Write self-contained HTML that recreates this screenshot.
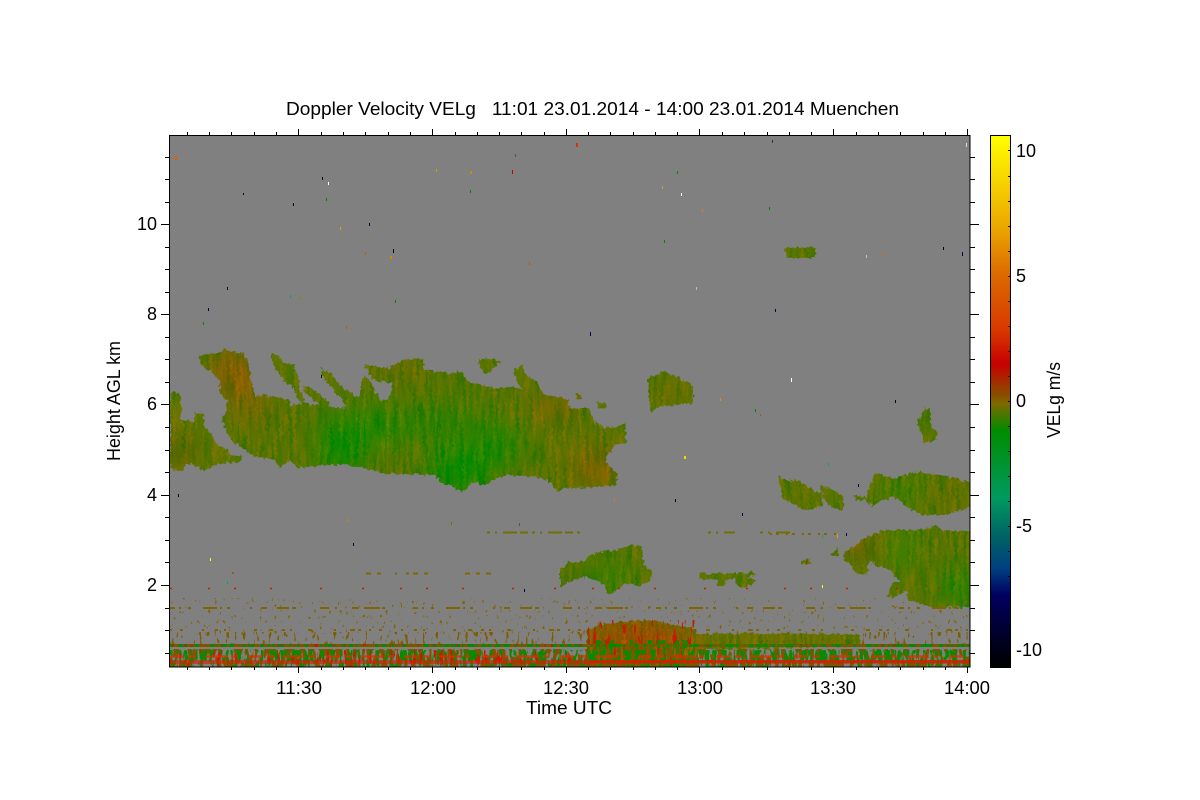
<!DOCTYPE html>
<html><head><meta charset="utf-8"><title>Doppler Velocity VELg</title>
<style>html,body{margin:0;padding:0;background:#fff;width:1200px;height:800px;overflow:hidden}svg{position:absolute;left:0;top:0}text{font-family:"Liberation Sans",sans-serif;font-size:18px;fill:#000}</style></head>
<body>
<svg width="1200" height="800" viewBox="0 0 1200 800" xmlns="http://www.w3.org/2000/svg">
<defs>
<linearGradient id="cb" x1="0" y1="135" x2="0" y2="667" gradientUnits="userSpaceOnUse">
<stop offset="0" stop-color="#ffff00"/><stop offset=".172" stop-color="#eca800"/><stop offset=".259" stop-color="#dc6c00"/><stop offset=".367" stop-color="#d83800"/><stop offset=".43" stop-color="#c80000"/><stop offset=".49" stop-color="#885000"/><stop offset=".504" stop-color="#806800"/><stop offset=".556" stop-color="#008c00"/><stop offset=".682" stop-color="#009a60"/><stop offset=".752" stop-color="#006464"/><stop offset=".814" stop-color="#004080"/><stop offset=".865" stop-color="#000060"/><stop offset="1" stop-color="#000000"/>
</linearGradient>
<filter id="streak" x="160" y="230" width="820" height="440" filterUnits="userSpaceOnUse" color-interpolation-filters="sRGB">
<feTurbulence type="fractalNoise" baseFrequency="0.3 0.03" numOctaves="2" seed="7" result="n"/>
<feColorMatrix in="n" type="matrix" values="1 0 0 0 0  .1 0 0 0 .45  0 0 0 0 0  0 0 0 0 1" result="m"/>
<feComposite in="SourceGraphic" in2="m" operator="arithmetic" k1="0" k2="1" k3=".5" k4="-.25"/>
</filter>
<filter id="jag" x="160" y="230" width="820" height="440" filterUnits="userSpaceOnUse" color-interpolation-filters="sRGB">
<feTurbulence type="fractalNoise" baseFrequency="0.3 0.25" numOctaves="2" seed="4" result="d"/>
<feDisplacementMap in="SourceGraphic" in2="d" scale="6" xChannelSelector="R" yChannelSelector="G"/>
</filter>
<filter id="blur" x="-60%" y="-60%" width="220%" height="220%"><feGaussianBlur stdDeviation="14"/></filter>
<filter id="sG" x="0" y="0" width="1" height="1" color-interpolation-filters="sRGB">
<feTurbulence type="fractalNoise" baseFrequency="0.3 0.08" numOctaves="2" seed="11"/>
<feColorMatrix type="matrix" values="0 0 0 0 .02  0 0 0 0 .55  0 0 0 0 0  22 0 0 0 -11.2"/>
<feComposite in2="SourceAlpha" operator="in"/>
</filter>
<filter id="sB" x="0" y="0" width="1" height="1" color-interpolation-filters="sRGB">
<feTurbulence type="fractalNoise" baseFrequency="0.28 0.07" numOctaves="2" seed="23"/>
<feColorMatrix type="matrix" values="0 0 0 0 .5  0 0 0 0 .33  0 0 0 0 0  22 0 0 0 -10.6"/>
<feComposite in2="SourceAlpha" operator="in"/>
</filter>
<filter id="sR" x="0" y="0" width="1" height="1" color-interpolation-filters="sRGB">
<feTurbulence type="fractalNoise" baseFrequency="0.3 0.06" numOctaves="2" seed="37"/>
<feColorMatrix type="matrix" values="0 0 0 0 .75  0 0 0 0 .12  0 0 0 0 0  22 0 0 0 -13.8"/>
<feComposite in2="SourceAlpha" operator="in"/>
</filter>
<filter id="sS" x="0" y="0" width="1" height="1" color-interpolation-filters="sRGB">
<feTurbulence type="fractalNoise" baseFrequency="0.35 0.1" numOctaves="2" seed="51"/>
<feColorMatrix type="matrix" values="0 0 0 0 .5  0 0 0 0 .36  0 0 0 0 0  24 0 0 0 -15"/>
<feComposite in2="SourceAlpha" operator="in"/>
</filter>
<filter id="sT" x="0" y="0" width="1" height="1" color-interpolation-filters="sRGB">
<feTurbulence type="fractalNoise" baseFrequency="0.35 0.2" numOctaves="2" seed="64"/>
<feColorMatrix type="matrix" values="0 0 0 0 .5  0 0 0 0 .4  0 0 0 0 0  24 0 0 0 -17"/>
<feComposite in2="SourceAlpha" operator="in"/>
</filter>
<clipPath id="cl">
<polygon transform="translate(160 340) scale(.33333)" points="30,155 62,160 65,205 62,240 85,240 100,245 105,215 130,220 135,265 155,285 170,310 190,320 215,345 248,350 240,365 150,375 150,390 125,388 100,372 75,375 70,392 35,390 30,370"/>
<polygon transform="translate(160 340) scale(.33333)" points="120,45 170,40 195,28 240,38 258,50 270,95 275,130 285,170 310,165 385,178 392,195 415,195 430,180 445,195 500,195 530,205 560,200 600,170 605,130 612,105 635,130 660,180 685,180 695,150 695,130 640,120 625,100 615,75 690,85 710,70 725,60 790,55 790,85 830,95 870,100 905,95 925,125 970,135 1000,145 1060,140 1100,155 1160,165 1225,180 1230,205 1290,205 1300,240 1330,262 1365,262 1395,250 1398,310 1365,315 1340,350 1340,370 1370,400 1370,435 1290,442 1215,445 1195,455 1165,420 1115,410 1040,405 1000,420 975,437 940,425 915,452 895,450 870,435 840,425 825,405 670,400 620,385 560,375 500,375 440,380 415,385 390,360 360,385 345,360 285,350 240,320 205,290 190,250 185,235 200,210 200,180 180,160 180,125 155,95 125,78 120,60"/>
<polygon transform="translate(160 340) scale(.33333)" points="333,42 355,45 375,70 395,70 415,110 418,150 435,180 420,185 400,145 375,125 350,90 335,65"/>
<polygon transform="translate(160 340) scale(.33333)" points="430,135 450,140 500,180 510,195 480,195 445,170 430,150"/>
<polygon transform="translate(160 340) scale(.33333)" points="485,85 510,100 545,140 590,170 600,200 560,200 540,170 500,125 483,100"/>
<polygon transform="translate(160 340) scale(.33333)" points="957,57 1003,57 1022,67 1000,80 995,103 960,90"/>
<polygon transform="translate(160 340) scale(.33333)" points="1062,92 1085,75 1095,100 1135,130 1150,165 1100,165 1075,135"/>
<polygon transform="translate(160 340) scale(.33333)" points="1250,160 1265,165 1260,178 1248,175"/>
<polygon transform="translate(160 340) scale(.33333)" points="1310,185 1338,190 1335,208 1312,205"/>
<polygon transform="translate(560 540) scale(.33333)" points="0,95 25,65 75,65 80,50 120,35 170,30 210,15 245,18 250,75 275,90 275,120 240,135 200,130 150,165 120,125 75,110 30,125 0,143"/>
<polygon transform="translate(560 540) scale(.33333)" points="415,100 450,103 480,98 530,100 580,96 590,104 560,112 592,122 560,142 530,140 525,115 500,118 495,135 472,135 470,118 420,118"/>
<polygon transform="translate(560 540) scale(.33333)" points="720,65 745,55 750,72 720,72"/>
<polygon transform="translate(760 400) scale(.33333)" points="55,225 70,240 110,240 150,265 185,285 190,320 130,330 105,315 70,300 60,265"/>
<polygon transform="translate(760 400) scale(.33333)" points="180,258 215,265 250,290 250,330 225,328 190,300"/>
<polygon transform="translate(760 400) scale(.33333)" points="280,285 310,290 325,300 320,280 345,220 400,235 470,215 545,225 640,250 640,320 550,345 485,345 440,320 400,290 360,305 335,320 320,300 285,300"/>
<polygon transform="translate(760 400) scale(.33333)" points="495,25 512,25 515,85 530,95 530,120 495,130 480,90 472,65"/>
<polygon transform="translate(760 400) scale(.33333)" points="250,460 285,435 310,415 370,390 450,390 530,380 545,392 640,392 640,620 525,625 440,600 440,570 410,590 380,590 400,545 420,545 390,510 345,495 325,480 320,520 285,520 270,490 250,480"/>
<polygon transform="translate(760 400) scale(.33333)" points="215,465 235,440 238,468 218,468"/>
<polygon transform="translate(760 400) scale(.33333)" points="120,483 150,480 150,491 120,491"/>
<polygon points="648,378 665,371 680,378 693,385 693,403 660,406 652,412 648,395"/>
<polygon points="785,248 815,247 815,258 787,258"/>
<polygon points="587,630 600,625 620,622 650,620 670,624 693,628 700,634 760,633 860,634 860,646 700,650 693,667 587,667"/>
</clipPath>
<clipPath id="plot"><rect x="170" y="136" width="800" height="531"/></clipPath>
</defs>
<rect width="1200" height="800" fill="#fff"/>
<rect x="169" y="135" width="801" height="532" fill="#808080"/>

<g clip-path="url(#plot)">
<g filter="url(#jag)">
<g clip-path="url(#cl)">
<g filter="url(#streak)">
<rect x="165" y="235" width="810" height="435" fill="#587400"/>
<g filter="url(#blur)">
<ellipse cx="342" cy="445" rx="22" ry="30" fill="#008c00"/>
<ellipse cx="378" cy="428" rx="30" ry="20" fill="#1a8800"/>
<ellipse cx="460" cy="470" rx="34" ry="22" fill="#008c00"/>
<ellipse cx="497" cy="445" rx="26" ry="22" fill="#1a8800"/>
<ellipse cx="440" cy="425" rx="50" ry="22" fill="#2e8000"/>
<ellipse cx="233" cy="372" rx="24" ry="24" fill="#8a5c00"/>
<ellipse cx="250" cy="405" rx="18" ry="16" fill="#806400"/>
<ellipse cx="178" cy="452" rx="16" ry="16" fill="#806000"/>
<ellipse cx="596" cy="468" rx="24" ry="22" fill="#806200"/>
<ellipse cx="557" cy="405" rx="26" ry="12" fill="#806200"/>
<ellipse cx="400" cy="366" rx="24" ry="8" fill="#786800"/>
<ellipse cx="610" cy="580" rx="18" ry="14" fill="#1c8400"/>
<ellipse cx="960" cy="587" rx="14" ry="18" fill="#008c00"/>
<ellipse cx="897" cy="548" rx="16" ry="16" fill="#108a00"/>
<ellipse cx="865" cy="545" rx="22" ry="12" fill="#805c00"/>
<ellipse cx="905" cy="490" rx="20" ry="10" fill="#1c8400"/>
<ellipse cx="945" cy="495" rx="14" ry="10" fill="#786800"/>
<ellipse cx="806" cy="495" rx="16" ry="9" fill="#6a7000"/>
<ellipse cx="670" cy="392" rx="20" ry="14" fill="#706c00"/>
<ellipse cx="640" cy="640" rx="60" ry="20" fill="#a04a00"/>
<ellipse cx="770" cy="640" rx="90" ry="8" fill="#7a6c00"/>
</g>
</g>
</g>
</g>

<!-- sparse rows -->
<g fill="none" stroke-width="2">
<path d="M170 608H970" stroke="#806400" stroke-dasharray="5 4 2 7 3 12 14 3 2 5 3 20 2 9 6 10 12 3 4 24 9 6 2 15 7 5 16 2 3 28" />
<path d="M170 630H970" stroke="#806400" stroke-dasharray="2 8 3 19 2 11 3 6 2 28 3 12 4 9 3 5 2 16 4 22 2 14 5 3 3 8" />
<path d="M366 573.5H440M465 573.5H480M486 573.5H495" stroke="#806800" stroke-dasharray="5 6 4 14 2 9 3 4"/>
<path d="M487 532.5H583M708 532.5H735M760 532.5H790" stroke="#6f7000" stroke-dasharray="3 5 2 6 14 3 8 4"/>
<path d="M770 534H840" stroke="#806800" stroke-dasharray="2 4 3 7"/>
<path d="M170 588.5H970" stroke="#c02000" stroke-dasharray="2 36 2 24 2 34 2 48 2 40" stroke-width="1.6"/>
</g>

<!-- dense bottom noise -->
<rect x="170" y="598" width="800" height="36" filter="url(#sT)"/>
<rect x="170" y="632" width="420" height="13" filter="url(#sS)"/>
<rect x="860" y="632" width="110" height="13" filter="url(#sS)"/>
<rect x="587" y="640" width="108" height="27" filter="url(#sG)"/>
<rect x="587" y="620" width="108" height="46" filter="url(#sR)"/>
<rect x="170" y="644" width="800" height="3" fill="#008c00"/>
<rect x="170" y="644" width="800" height="3" filter="url(#sR)"/>
<rect x="170" y="644" width="800" height="3" filter="url(#sB)"/>
<rect x="170" y="649" width="800" height="18" filter="url(#sB)"/>
<rect x="170" y="650" width="800" height="17" filter="url(#sG)"/>
<rect x="170" y="650" width="420" height="17" filter="url(#sR)"/>
<path d="M170 656.5H970" stroke="#d83000" stroke-width="2.5" stroke-dasharray="14 5 7 9 22 4 5 12" opacity=".75" fill="none"/>
<rect x="170" y="660" width="420" height="4" fill="#d02000" opacity=".6"/>
<rect x="590" y="660" width="380" height="3.5" fill="#d02000" opacity=".9"/>
<rect x="170" y="664" width="800" height="3" filter="url(#sB)"/>

<!-- scattered pixels -->
<g>
<rect x="175" y="156" width="2" height="4" fill="#e06000"/><rect x="243" y="193" width="1" height="2" fill="#000040"/><rect x="293" y="203" width="1" height="3" fill="#000"/><rect x="322" y="177" width="1" height="3" fill="#000"/><rect x="328" y="182" width="1" height="3" fill="#fff"/><rect x="326" y="198" width="1" height="3" fill="#080"/><rect x="340" y="227" width="1" height="3" fill="#e0a000"/><rect x="369" y="223" width="1" height="3" fill="#004"/><rect x="393" y="249" width="1" height="4" fill="#000"/><rect x="390" y="256" width="2" height="3" fill="#c80"/><rect x="365" y="252" width="1" height="3" fill="#a60"/><rect x="529" y="262" width="1" height="3" fill="#a60"/><rect x="576" y="143" width="2" height="4" fill="#e03000"/><rect x="515" y="154" width="1" height="3" fill="#555"/><rect x="512" y="170" width="1" height="4" fill="#c00"/><rect x="436" y="169" width="1" height="3" fill="#d0a000"/><rect x="470" y="171" width="2" height="3" fill="#c80"/><rect x="470" y="190" width="1" height="3" fill="#080"/><rect x="702" y="209" width="1" height="3" fill="#e08000"/><rect x="681" y="193" width="1" height="3" fill="#fff"/><rect x="662" y="186" width="1" height="3" fill="#ca0"/><rect x="677" y="171" width="1" height="3" fill="#080"/><rect x="769" y="207" width="1" height="3" fill="#080"/><rect x="664" y="240" width="1" height="3" fill="#080"/><rect x="966" y="143" width="1" height="4" fill="#ddb"/><rect x="772" y="140" width="1" height="3" fill="#333"/><rect x="943" y="247" width="1" height="3" fill="#000"/><rect x="962" y="252" width="1" height="4" fill="#004"/><rect x="883" y="252" width="1" height="3" fill="#e60"/><rect x="866" y="255" width="1" height="3" fill="#cc8"/><rect x="227" y="287" width="1" height="3" fill="#000"/><rect x="208" y="308" width="1" height="3" fill="#004"/><rect x="203" y="322" width="1" height="3" fill="#080"/><rect x="290" y="295" width="1" height="3" fill="#0a6"/><rect x="300" y="297" width="1" height="3" fill="#880"/><rect x="346" y="326" width="1" height="3" fill="#c50"/><rect x="395" y="300" width="1" height="3" fill="#080"/><rect x="590" y="332" width="1" height="4" fill="#004"/><rect x="775" y="309" width="1" height="3" fill="#004"/><rect x="696" y="287" width="1" height="3" fill="#bbb"/><rect x="791" y="378" width="1" height="4" fill="#fff"/><rect x="720" y="398" width="1" height="3" fill="#e80"/><rect x="895" y="400" width="1" height="3" fill="#000"/><rect x="755" y="409" width="1" height="3" fill="#080"/><rect x="321" y="375" width="1" height="3" fill="#000"/><rect x="178" y="494" width="1" height="3" fill="#004"/><rect x="347" y="519" width="1" height="3" fill="#c80"/><rect x="519" y="523" width="1" height="3" fill="#555"/><rect x="451" y="522" width="1" height="3" fill="#860"/><rect x="614" y="498" width="1" height="3" fill="#c80"/><rect x="684" y="456" width="2" height="3" fill="#ffd000"/><rect x="675" y="499" width="1" height="3" fill="#000"/><rect x="742" y="513" width="1" height="3" fill="#004"/><rect x="210" y="558" width="1" height="3" fill="#ff0"/><rect x="353" y="543" width="1" height="3" fill="#004"/><rect x="227" y="581" width="1" height="3" fill="#0a6"/><rect x="232" y="572" width="2" height="2" fill="#860"/><rect x="524" y="589" width="1" height="3" fill="#004"/><rect x="822" y="585" width="1" height="3" fill="#ff0"/><rect x="806" y="561" width="1" height="2" fill="#e00"/><rect x="822" y="535" width="1" height="3" fill="#0a6"/><rect x="846" y="533" width="1" height="3" fill="#004"/><rect x="837" y="534" width="1" height="4" fill="#e90"/><rect x="828" y="463" width="1" height="3" fill="#0a6"/><rect x="858" y="484" width="1" height="3" fill="#004"/><rect x="760" y="414" width="1" height="2" fill="#860"/>
</g>
</g>

<!-- axes -->
<rect x="169.5" y="135.5" width="800.5" height="531.5" fill="none" stroke="#000" stroke-width="1" shape-rendering="crispEdges"/>
<path shape-rendering="crispEdges" stroke="#000" stroke-width="1" fill="none" d="
M161 224.5h8M161 314.5h8M161 404.5h8M161 495.5h8M161 585.5h8
M970 224.5h9M970 314.5h9M970 404.5h9M970 495.5h9M970 585.5h9
M165 157.5h4M165 179.5h4M165 202.5h4M165 247.5h4M165 269.5h4M165 292.5h4M165 337.5h4M165 359.5h4M165 382.5h4M165 427.5h4M165 450.5h4M165 472.5h4M165 517.5h4M165 540.5h4M165 562.5h4M165 608.5h4M165 630.5h4M165 653.5h4
M970 157.5h5M970 179.5h5M970 202.5h5M970 247.5h5M970 269.5h5M970 292.5h5M970 337.5h5M970 359.5h5M970 382.5h5M970 427.5h5M970 450.5h5M970 472.5h5M970 517.5h5M970 540.5h5M970 562.5h5M970 608.5h5M970 630.5h5M970 653.5h5
M298.5 667v6M432.5 667v6M566.5 667v6M699.5 667v6M833.5 667v6M967.5 667v6
M298.5 135v-6M432.5 135v-6M566.5 135v-6M699.5 135v-6M833.5 135v-6M967.5 135v-6
M187.5 667v3M209.5 667v3M231.5 667v3M254.5 667v3M276.5 667v3M321.5 667v3M343.5 667v3M365.5 667v3M388.5 667v3M410.5 667v3M455.5 667v3M477.5 667v3M499.5 667v3M521.5 667v3M544.5 667v3M588.5 667v3M610.5 667v3M633.5 667v3M655.5 667v3M677.5 667v3M722.5 667v3M744.5 667v3M767.5 667v3M789.5 667v3M811.5 667v3M856.5 667v3M878.5 667v3M900.5 667v3M923.5 667v3M945.5 667v3
M187.5 135v-3M209.5 135v-3M231.5 135v-3M254.5 135v-3M276.5 135v-3M321.5 135v-3M343.5 135v-3M365.5 135v-3M388.5 135v-3M410.5 135v-3M455.5 135v-3M477.5 135v-3M499.5 135v-3M521.5 135v-3M544.5 135v-3M588.5 135v-3M610.5 135v-3M633.5 135v-3M655.5 135v-3M677.5 135v-3M722.5 135v-3M744.5 135v-3M767.5 135v-3M789.5 135v-3M811.5 135v-3M856.5 135v-3M878.5 135v-3M900.5 135v-3M923.5 135v-3M945.5 135v-3"/>

<!-- colorbar -->
<rect x="990" y="135" width="20" height="532" fill="url(#cb)"/>
<rect x="990.5" y="135.5" width="20" height="532" fill="none" stroke="#000" stroke-width="1" shape-rendering="crispEdges"/>
<path shape-rendering="crispEdges" stroke="#000" stroke-width="1" fill="none" d="M1008 150.5h2M1008 176.5h2M1008 201.5h2M1008 226.5h2M1008 251.5h2M1008 276.5h2M1008 301.5h2M1008 326.5h2M1008 351.5h2M1008 376.5h2M1008 401.5h2M1008 426.5h2M1008 451.5h2M1008 476.5h2M1008 501.5h2M1008 526.5h2M1008 551.5h2M1008 576.5h2M1008 601.5h2M1008 626.5h2M1008 651.5h2"/>

<!-- text -->
<text x="286" y="115" textLength="613" lengthAdjust="spacingAndGlyphs" xml:space="preserve" style="white-space:pre">Doppler Velocity VELg   11:01 23.01.2014 - 14:00 23.01.2014 Muenchen</text>
<g text-anchor="end">
<text x="157" y="230">10</text><text x="157" y="320">8</text><text x="157" y="410">6</text><text x="157" y="501">4</text><text x="157" y="591">2</text>
</g>
<text x="276" y="694" textLength="46" lengthAdjust="spacingAndGlyphs">11:30</text><text x="410" y="694" textLength="46" lengthAdjust="spacingAndGlyphs">12:00</text><text x="543" y="694" textLength="46" lengthAdjust="spacingAndGlyphs">12:30</text><text x="677" y="694" textLength="46" lengthAdjust="spacingAndGlyphs">13:00</text><text x="810" y="694" textLength="46" lengthAdjust="spacingAndGlyphs">13:30</text><text x="944" y="694" textLength="46" lengthAdjust="spacingAndGlyphs">14:00</text>
<text x="526" y="714" textLength="86" lengthAdjust="spacingAndGlyphs">Time UTC</text>
<text transform="translate(120 461) rotate(-90)" textLength="120" lengthAdjust="spacingAndGlyphs">Height AGL km</text>
<text x="1016" y="157">10</text><text x="1016" y="282">5</text><text x="1016" y="407">0</text><text x="1016" y="532">-5</text><text x="1016" y="656">-10</text>
<text transform="translate(1060 438) rotate(-90)" textLength="76" lengthAdjust="spacingAndGlyphs">VELg m/s</text>
</svg>
</body></html>
